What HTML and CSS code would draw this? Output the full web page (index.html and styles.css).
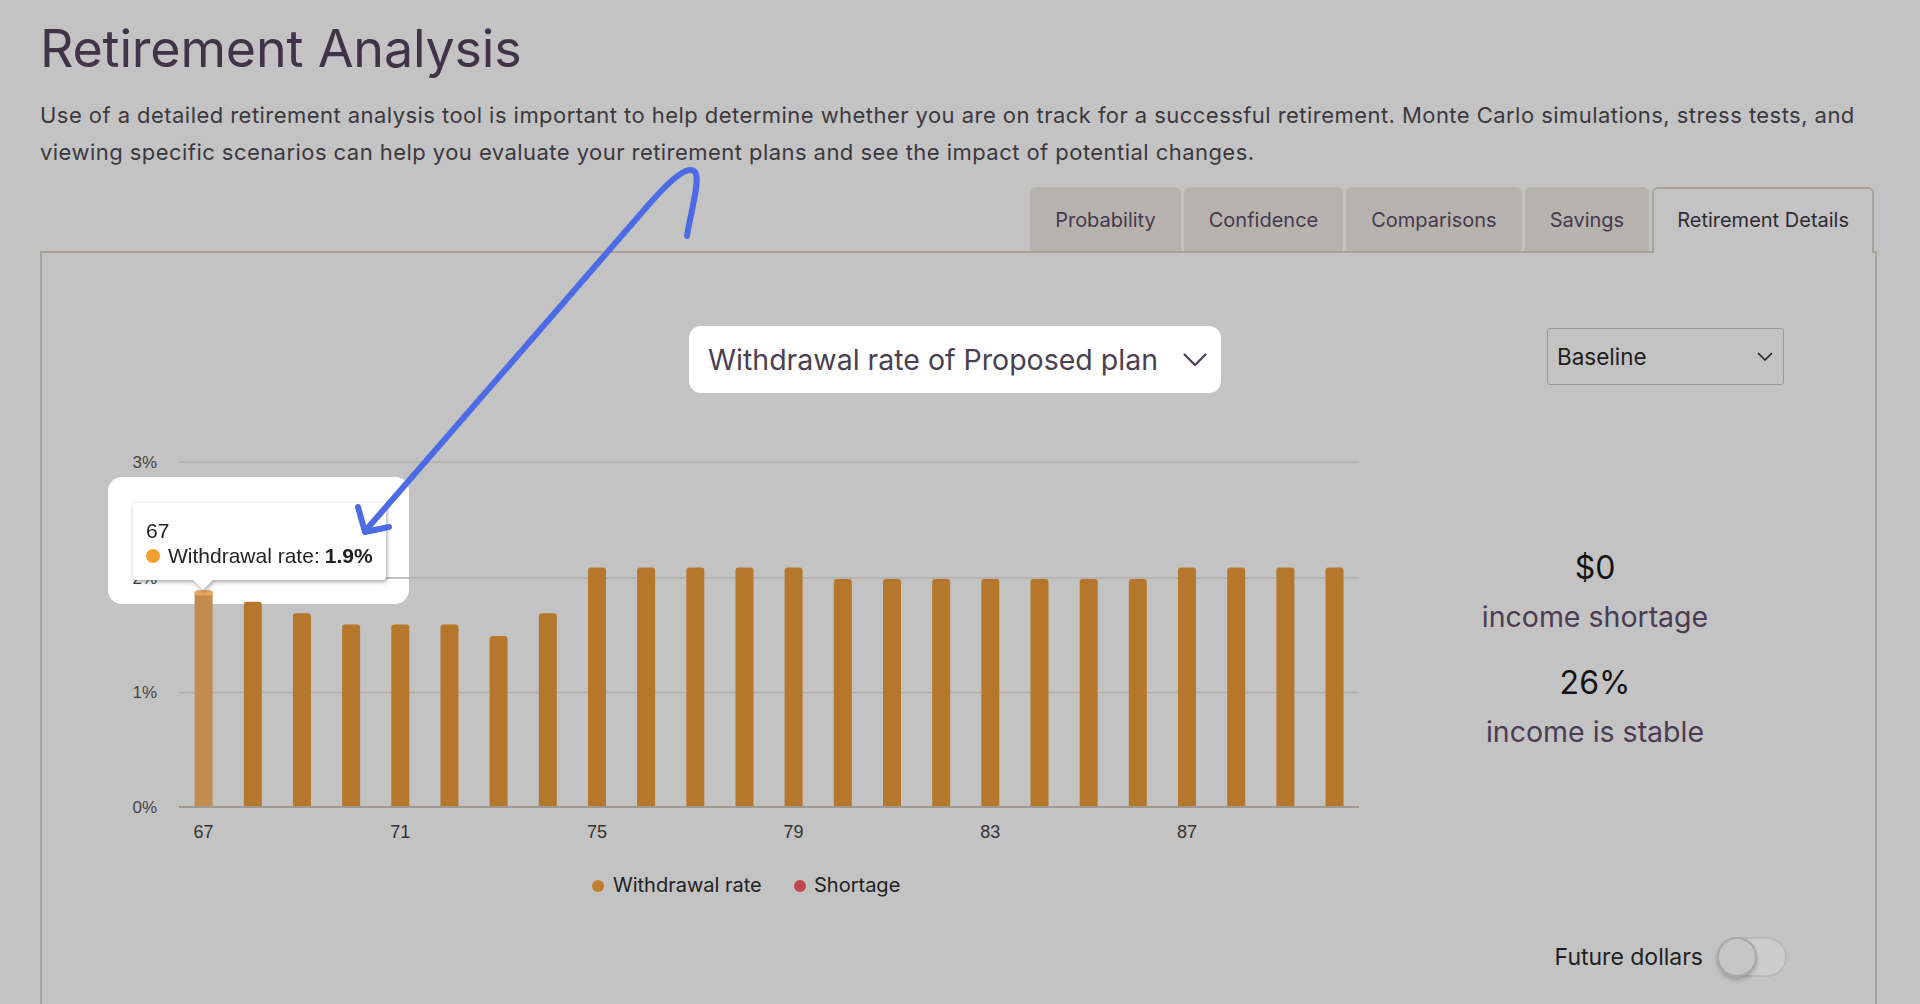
FILE: index.html
```html
<!DOCTYPE html>
<html lang="en">
<head>
<meta charset="utf-8">
<title>Retirement Analysis</title>
<link rel="stylesheet" href="styles.css">
</head>
<body>
<div class="page">
  <h1 class="title">Retirement Analysis</h1>
  <p class="intro">Use of a detailed retirement analysis tool is important to help determine whether you are on track for a successful retirement. Monte Carlo simulations, stress tests, and viewing specific scenarios can help you evaluate your retirement plans and see the impact of potential changes.</p>

  <nav class="tabs">
    <div class="tab">Probability</div>
    <div class="tab">Confidence</div>
    <div class="tab">Comparisons</div>
    <div class="tab">Savings</div>
    <div class="tab active">Retirement Details</div>
  </nav>

  <section class="panel">
    <div class="panel-top">
      <div></div>
      <button class="metric-select">
        <span>Withdrawal rate of Proposed plan</span>
        <svg class="chev-lg" width="24" height="14" viewBox="0 0 24 14"><path d="M1.5 1.5 L12 12 L22.5 1.5"/></svg>
      </button>
      <div class="scenario-cell">
        <button class="scenario-select">
          <span>Baseline</span>
          <svg class="chev-sm" width="16" height="10" viewBox="0 0 16 10"><path d="M1.5 1.5 L8 8 L14.5 1.5"/></svg>
        </button>
      </div>
    </div>

    <div class="panel-body">
      <div class="chart">
        <div class="spotlight"></div>
        <svg class="chart-svg" width="1358" height="517" viewBox="42 393 1358 517">
          <defs>
            <clipPath id="plot"><rect x="179" y="400" width="1180" height="407"/></clipPath>
          </defs>
          <g class="grid">
            <line x1="179" y1="462" x2="1359" y2="462"/>
            <line x1="179" y1="578" x2="1359" y2="578"/>
            <line x1="179" y1="692.5" x2="1359" y2="692.5"/>
          </g>
          <g class="ylabels">
            <text x="157" y="468">3%</text>
            <text x="157" y="584">2%</text>
            <text x="157" y="698">1%</text>
            <text x="157" y="813">0%</text>
          </g>
          <g class="bars" clip-path="url(#plot)">
            <rect class="hover" x="194.6" y="590.4" width="18" height="222" rx="3"/>
            <rect class="hover-top" x="194.6" y="590.4" width="18" height="5" rx="2.5"/>
            <rect x="243.8" y="601.8" width="18" height="211" rx="3"/>
            <rect x="292.9" y="613.2" width="18" height="200" rx="3"/>
            <rect x="342.1" y="624.6" width="18" height="188" rx="3"/>
            <rect x="391.3" y="624.6" width="18" height="188" rx="3"/>
            <rect x="440.5" y="624.6" width="18" height="188" rx="3"/>
            <rect x="489.6" y="636" width="18" height="177" rx="3"/>
            <rect x="538.8" y="613.2" width="18" height="200" rx="3"/>
            <rect x="588.0" y="567.6" width="18" height="245" rx="3"/>
            <rect x="637.1" y="567.6" width="18" height="245" rx="3"/>
            <rect x="686.3" y="567.6" width="18" height="245" rx="3"/>
            <rect x="735.5" y="567.6" width="18" height="245" rx="3"/>
            <rect x="784.6" y="567.6" width="18" height="245" rx="3"/>
            <rect x="833.8" y="579" width="18" height="234" rx="3"/>
            <rect x="883.0" y="579" width="18" height="234" rx="3"/>
            <rect x="932.2" y="579" width="18" height="234" rx="3"/>
            <rect x="981.3" y="579" width="18" height="234" rx="3"/>
            <rect x="1030.5" y="579" width="18" height="234" rx="3"/>
            <rect x="1079.7" y="579" width="18" height="234" rx="3"/>
            <rect x="1128.8" y="579" width="18" height="234" rx="3"/>
            <rect x="1178.0" y="567.6" width="18" height="245" rx="3"/>
            <rect x="1227.2" y="567.6" width="18" height="245" rx="3"/>
            <rect x="1276.4" y="567.6" width="18" height="245" rx="3"/>
            <rect x="1325.5" y="567.6" width="18" height="245" rx="3"/>
          </g>
          <line class="axis" x1="179" y1="807" x2="1359" y2="807"/>
          <g class="xlabels">
            <text x="203.6" y="838">67</text>
            <text x="400.3" y="838">71</text>
            <text x="597.0" y="838">75</text>
            <text x="793.6" y="838">79</text>
            <text x="990.3" y="838">83</text>
            <text x="1187.0" y="838">87</text>
          </g>
          <g class="legend">
            <circle cx="598" cy="886" r="6" class="dot-wr"/>
            <text x="613" y="892">Withdrawal rate</text>
            <circle cx="800" cy="886" r="6" class="dot-sh"/>
            <text x="814" y="892">Shortage</text>
          </g>
        </svg>
        <div class="tooltip">
          <div class="tt-age">67</div>
          <div class="tt-row"><span class="tt-dot"></span>Withdrawal rate: <b>1.9%</b></div>
        </div>
      </div>

      <div class="stats">
        <div class="stat-num">$0</div>
        <div class="stat-label">income shortage</div>
        <div class="stat-num second">26%</div>
        <div class="stat-label">income is stable</div>
      </div>
    </div>

    <div class="toggle-row">
      <span class="toggle-label">Future dollars</span>
      <span class="switch"><span class="knob"></span></span>
    </div>
  </section>

  <svg class="annotation" width="1920" height="1004" viewBox="0 0 1920 1004">
    <path d="M687 236 C690 214 701 180 695 172 C689 165 674 176 651 202 L366 530"/>
    <path d="M358 507 L365 532 L389 527"/>
  </svg>
</div>
</body>
</html>
```

FILE: styles.css
```css
* { box-sizing: border-box; }

html, body {
  margin: 0;
  background: #c3c3c3;
}

body {
  font-family: "Inter", "Noto Sans", sans-serif;
  color: #3b3a3d;
  overflow: hidden;
}

.page {
  position: relative;
  padding: 18px 43px 0 40px;
  height: 1004px;
}

.title {
  margin: 0;
  font-size: 52px;
  line-height: 62px;
  font-weight: 400;
  color: #3f3448;
  letter-spacing: -0.2px;
}

.intro {
  margin: 17px 0 0;
  font-size: 22px;
  line-height: 37px;
  letter-spacing: 0.45px;
  color: #3b393e;
}

.tabs {
  display: flex;
  justify-content: flex-end;
  align-items: flex-end;
  gap: 3px;
  margin-top: 16px;
  padding-right: 3px;
}

.tab {
  height: 64px;
  padding: 1px 25px 0;
  display: flex;
  align-items: center;
  font-size: 20px;
  color: #45394d;
  background: #b6b3ae;
  border-radius: 6px 6px 0 0;
}

.tab.active {
  position: relative;
  z-index: 1;
  height: 66px;
  margin-bottom: -2px;
  background: #c3c3c3;
  border: 2px solid #a8a29b;
  border-bottom: none;
  color: #302b35;
  padding: 0 23px 2px;
}

.panel {
  border: 2px solid #a8a29b;
  border-bottom: none;
  padding: 73px 0 60px;
}

.panel-top {
  display: grid;
  grid-template-columns: 1fr auto 1fr;
  align-items: start;
}

.metric-select {
  display: flex;
  align-items: center;
  gap: 25px;
  height: 67px;
  padding: 0 14px 0 19px;
  border: none;
  border-radius: 12px;
  background: #ffffff;
  font-family: "Inter", sans-serif;
  font-size: 28.5px;
  color: #4a3f52;
  margin-left: -7px;
}

.chev-lg path {
  fill: none;
  stroke: #4a3f52;
  stroke-width: 2.2;
  stroke-linecap: round;
  stroke-linejoin: round;
}

.scenario-cell {
  display: flex;
  justify-content: flex-end;
  padding-right: 91px;
}

.scenario-select {
  margin-top: 2px;
  width: 237px;
  height: 57px;
  display: flex;
  align-items: center;
  justify-content: space-between;
  padding: 0 10px 0 9px;
  background: transparent;
  border: 1.5px solid #9c9894;
  border-radius: 3px;
  font-family: "Inter", sans-serif;
  font-size: 22.5px;
  color: #1e1e1e;
}

.chev-sm path {
  fill: none;
  stroke: #222;
  stroke-width: 1.7;
  stroke-linecap: round;
  stroke-linejoin: round;
}

.panel-body {
  display: flex;
}

.chart {
  position: relative;
  width: 1358px;
  height: 517px;
  flex: none;
}

.spotlight {
  position: absolute;
  left: 66px;
  top: 84px;
  width: 301px;
  height: 127px;
  background: #ffffff;
  border-radius: 14px;
  z-index: 0;
}

.chart-svg {
  position: relative;
  z-index: 1;
  display: block;
}

.grid line {
  stroke: #b2afac;
  stroke-width: 1.5;
}

.axis {
  stroke: #9f9992;
  stroke-width: 2;
}

.ylabels text {
  font-family: "Liberation Sans", Arial, sans-serif;
  font-size: 17px;
  fill: #444;
  text-anchor: end;
}

.xlabels text {
  font-family: "Liberation Sans", Arial, sans-serif;
  font-size: 18px;
  fill: #333;
  text-anchor: middle;
}

.bars rect { fill: #b4772b; }
.bars rect.hover { fill: #c28b4f; }
.bars rect.hover-top { fill: #eaa659; }

.legend text {
  font-family: "Inter", sans-serif;
  font-size: 20px;
  fill: #222;
}
.dot-wr { fill: #c07f2e; }
.dot-sh { fill: #c0464e; }

.tooltip {
  position: absolute;
  z-index: 2;
  left: 91px;
  top: 110px;
  width: 253px;
  height: 77px;
  padding: 15px 6px 0 13px;
  background: #ffffff;
  border-radius: 3px;
  font-family: "Liberation Sans", Arial, sans-serif;
  font-size: 21px;
  line-height: 25px;
  color: #222;
  filter: drop-shadow(1px 2px 2px rgba(0, 0, 0, 0.35));
}

.tooltip::after {
  content: "";
  position: absolute;
  left: 60px;
  bottom: -10px;
  border-left: 10px solid transparent;
  border-right: 10px solid transparent;
  border-top: 10px solid #ffffff;
}

.tt-row {
  display: flex;
  align-items: center;
  white-space: nowrap;
}

.tt-row b { margin-left: 5px; }

.tt-dot {
  width: 14px;
  height: 14px;
  border-radius: 50%;
  background: #f0a032;
  margin-right: 8px;
  flex: none;
}

.stats {
  width: 390px;
  padding-top: 155px;
  text-align: center;
}

.stat-num {
  font-size: 32px;
  line-height: 40px;
  color: #141414;
}

.stat-num.second { margin-top: 26px; }

.stat-label {
  margin-top: 9px;
  font-size: 28.5px;
  line-height: 40px;
  color: #4a3d52;
}

.toggle-row {
  display: flex;
  justify-content: flex-end;
  align-items: center;
  gap: 14px;
  margin-top: 27px;
  padding-right: 88px;
}

.toggle-label {
  font-size: 23px;
  color: #222;
}

.switch {
  position: relative;
  width: 70px;
  height: 40px;
  border-radius: 20px;
  background: #cdcdcd;
  border: 2px solid #b9b9b9;
}

.knob {
  position: absolute;
  left: -2px;
  top: -2px;
  width: 40px;
  height: 40px;
  border-radius: 50%;
  background: #c6c6c6;
  border: 2px solid #a9a9a9;
  box-shadow: 0 3px 4px rgba(0, 0, 0, 0.2);
}

.annotation {
  position: absolute;
  left: 0;
  top: 0;
  z-index: 5;
  pointer-events: none;
}

.annotation path {
  fill: none;
  stroke: #4e6be6;
  stroke-width: 6;
  stroke-linecap: round;
  stroke-linejoin: round;
}
```
